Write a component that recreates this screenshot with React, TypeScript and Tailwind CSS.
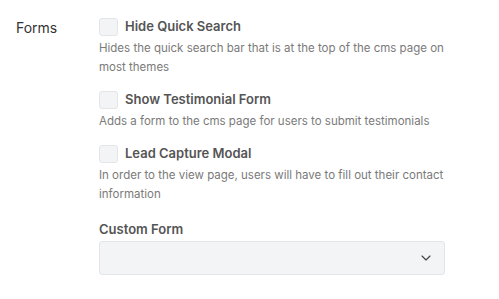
import { ChevronDown } from "lucide-react";

const options = [
  {
    title: "Hide Quick Search",
    desc: "Hides the quick search bar that is at the top of the cms page on most themes",
  },
  {
    title: "Show Testimonial Form",
    desc: "Adds a form to the cms page for users to submit testimonials",
  },
  {
    title: "Lead Capture Modal",
    desc: "In order to the view page, users will have to fill out their contact information",
  },
];

const App = () => {
  return (
    <div className="w-[499px] h-[299px] bg-white font-['Inter',sans-serif] flex pt-[18px] pl-4">
      <div className="w-[83px] text-[14px] leading-[18px] text-[#333] pt-[1px]">Forms</div>
      <div className="w-[346px] flex flex-col">
        {options.map((o) => (
          <div key={o.title} className="flex flex-col mb-[14px]">
            <label className="flex items-center gap-[7px] h-[18px]">
              <span className="w-[19px] h-[18px] rounded-[3px] bg-[#f3f4f6] border border-[#e3e5e8]" />
              <span className="text-[13px] font-semibold text-[#555]">{o.title}</span>
            </label>
            <p className="mt-[3px] text-[11.5px] leading-[19px] text-[#7a7a7a]">{o.desc}</p>
          </div>
        ))}
        <div className="text-[13px] leading-[18px] font-semibold text-[#555] mt-[2px]">Custom Form</div>
        <div className="mt-[3px] h-[34px] w-[346px] rounded-[3px] bg-[#f3f4f6] border border-[#e3e5e8] flex items-center justify-end pr-[10px]">
          <ChevronDown size={16} strokeWidth={1.75} className="text-[#444]" />
        </div>
      </div>
    </div>
  );
};

export default App;
